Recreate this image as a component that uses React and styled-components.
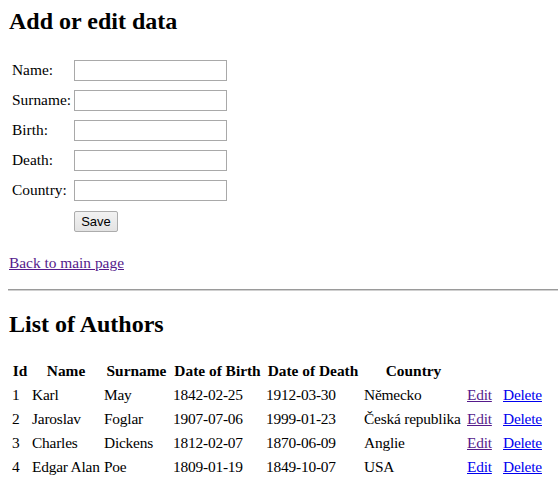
import React from "react";
import styled, { createGlobalStyle } from "styled-components";

const GlobalStyle = createGlobalStyle`
  body {
    margin: 8px 0 8px 8px;
    background: #fff;
    color: #000;
    font-family: "Liberation Serif", "Times New Roman", serif;
    font-size: 15.4px;
  }
`;

const Heading = styled.h2`
  font-size: 24px;
  font-weight: bold;
  margin: ${({ first }) => (first ? "0" : "20px")} 0 20px;
  padding-left: 1px;
  line-height: 27.6px;
`;

const FormTable = styled.table`
  border-spacing: 2px 0;
  margin-top: 0.5px;
  margin-left: 1px;

  td {
    padding: 4px 1px 5px;
    vertical-align: middle;
  }
`;

const Label = styled.td`
  padding-right: 0 !important;
`;

const ButtonCell = styled.td`
  padding-top: 5px !important;
`;

const Input = styled.input`
  box-sizing: border-box;
  width: 153px;
  height: 21px;
  margin: 0;
  border: 1px solid #a9a9a9;
  background: #fff;
  display: block;
`;

const Button = styled.button`
  box-sizing: border-box;
  width: 44px;
  height: 21px;
  margin: 0;
  padding: 0;
  font-family: "Liberation Sans", Arial, sans-serif;
  font-size: 13px;
  color: #000;
  border: 1px solid #acacac;
  border-radius: 2px;
  background: linear-gradient(#f2f2f2, #e3e3e3);
  display: block;
`;

const Para = styled.p`
  margin: 17px 0 0;
  line-height: 18.4px;
  padding-left: 1px;
`;

const Link = styled.a`
  color: ${({ visited }) => (visited ? "#551a8b" : "#0000ee")};
  text-decoration: underline;
  cursor: pointer;
`;

const Rule = styled.hr`
  margin: 17px 0 0;
  border: 0;
  border-top: 1px solid #9a9a9a;
  border-bottom: 1px solid #d0d0d0;
  height: 0;
`;

const DataTable = styled.table`
  border-spacing: 2px;
  margin-top: -1px;
  margin-left: 1px;

  th,
  td {
    padding: 2px 1px 1.6px;
    white-space: nowrap;
    line-height: 18.4px;
  }

  th {
    font-weight: bold;
    text-align: center;
  }

  td {
    text-align: left;
    letter-spacing: -0.2px;
  }
`;

const Cell = styled.td`
  width: ${({ w }) => w}px;
`;

const columns = [
  { key: "id", title: "Id", w: 16 },
  { key: "name", title: "Name", w: 68 },
  { key: "surname", title: "Surname", w: 65 },
  { key: "birth", title: "Date of Birth", w: 89 },
  { key: "death", title: "Date of Death", w: 94 },
  { key: "country", title: "Country", w: 99 },
];

const fields = ["Name:", "Surname:", "Birth:", "Death:", "Country:"];

const authors = [
  { id: 1, name: "Karl", surname: "May", birth: "1842-02-25", death: "1912-03-30", country: "Německo", visited: true },
  { id: 2, name: "Jaroslav", surname: "Foglar", birth: "1907-07-06", death: "1999-01-23", country: "Česká republika", visited: true },
  { id: 3, name: "Charles", surname: "Dickens", birth: "1812-02-07", death: "1870-06-09", country: "Anglie", visited: true },
  { id: 4, name: "Edgar Alan", surname: "Poe", birth: "1809-01-19", death: "1849-10-07", country: "USA", visited: false },
];

export default function App() {
  return (
    <>
      <GlobalStyle />
      <Heading first>Add or edit data</Heading>
      <form onSubmit={(e) => e.preventDefault()}>
        <FormTable>
          <tbody>
            {fields.map((f) => (
              <tr key={f}>
                <Label>{f}</Label>
                <td>
                  <Input type="text" />
                </td>
              </tr>
            ))}
            <tr>
              <td></td>
              <ButtonCell>
                <Button type="submit">Save</Button>
              </ButtonCell>
            </tr>
          </tbody>
        </FormTable>
      </form>
      <Para>
        <Link visited>Back to main page</Link>
      </Para>
      <Rule />
      <Heading>List of Authors</Heading>
      <DataTable>
        <thead>
          <tr>
            {columns.map((c) => (
              <th key={c.key}>{c.title}</th>
            ))}
          </tr>
        </thead>
        <tbody>
          {authors.map((a) => (
            <tr key={a.id}>
              {columns.map((c) => (
                <Cell key={c.key} w={c.w}>
                  {a[c.key]}
                </Cell>
              ))}
              <Cell w={32}>
                <Link visited={a.visited}>Edit</Link>
              </Cell>
              <Cell w={38}>
                <Link>Delete</Link>
              </Cell>
            </tr>
          ))}
        </tbody>
      </DataTable>
    </>
  );
}
